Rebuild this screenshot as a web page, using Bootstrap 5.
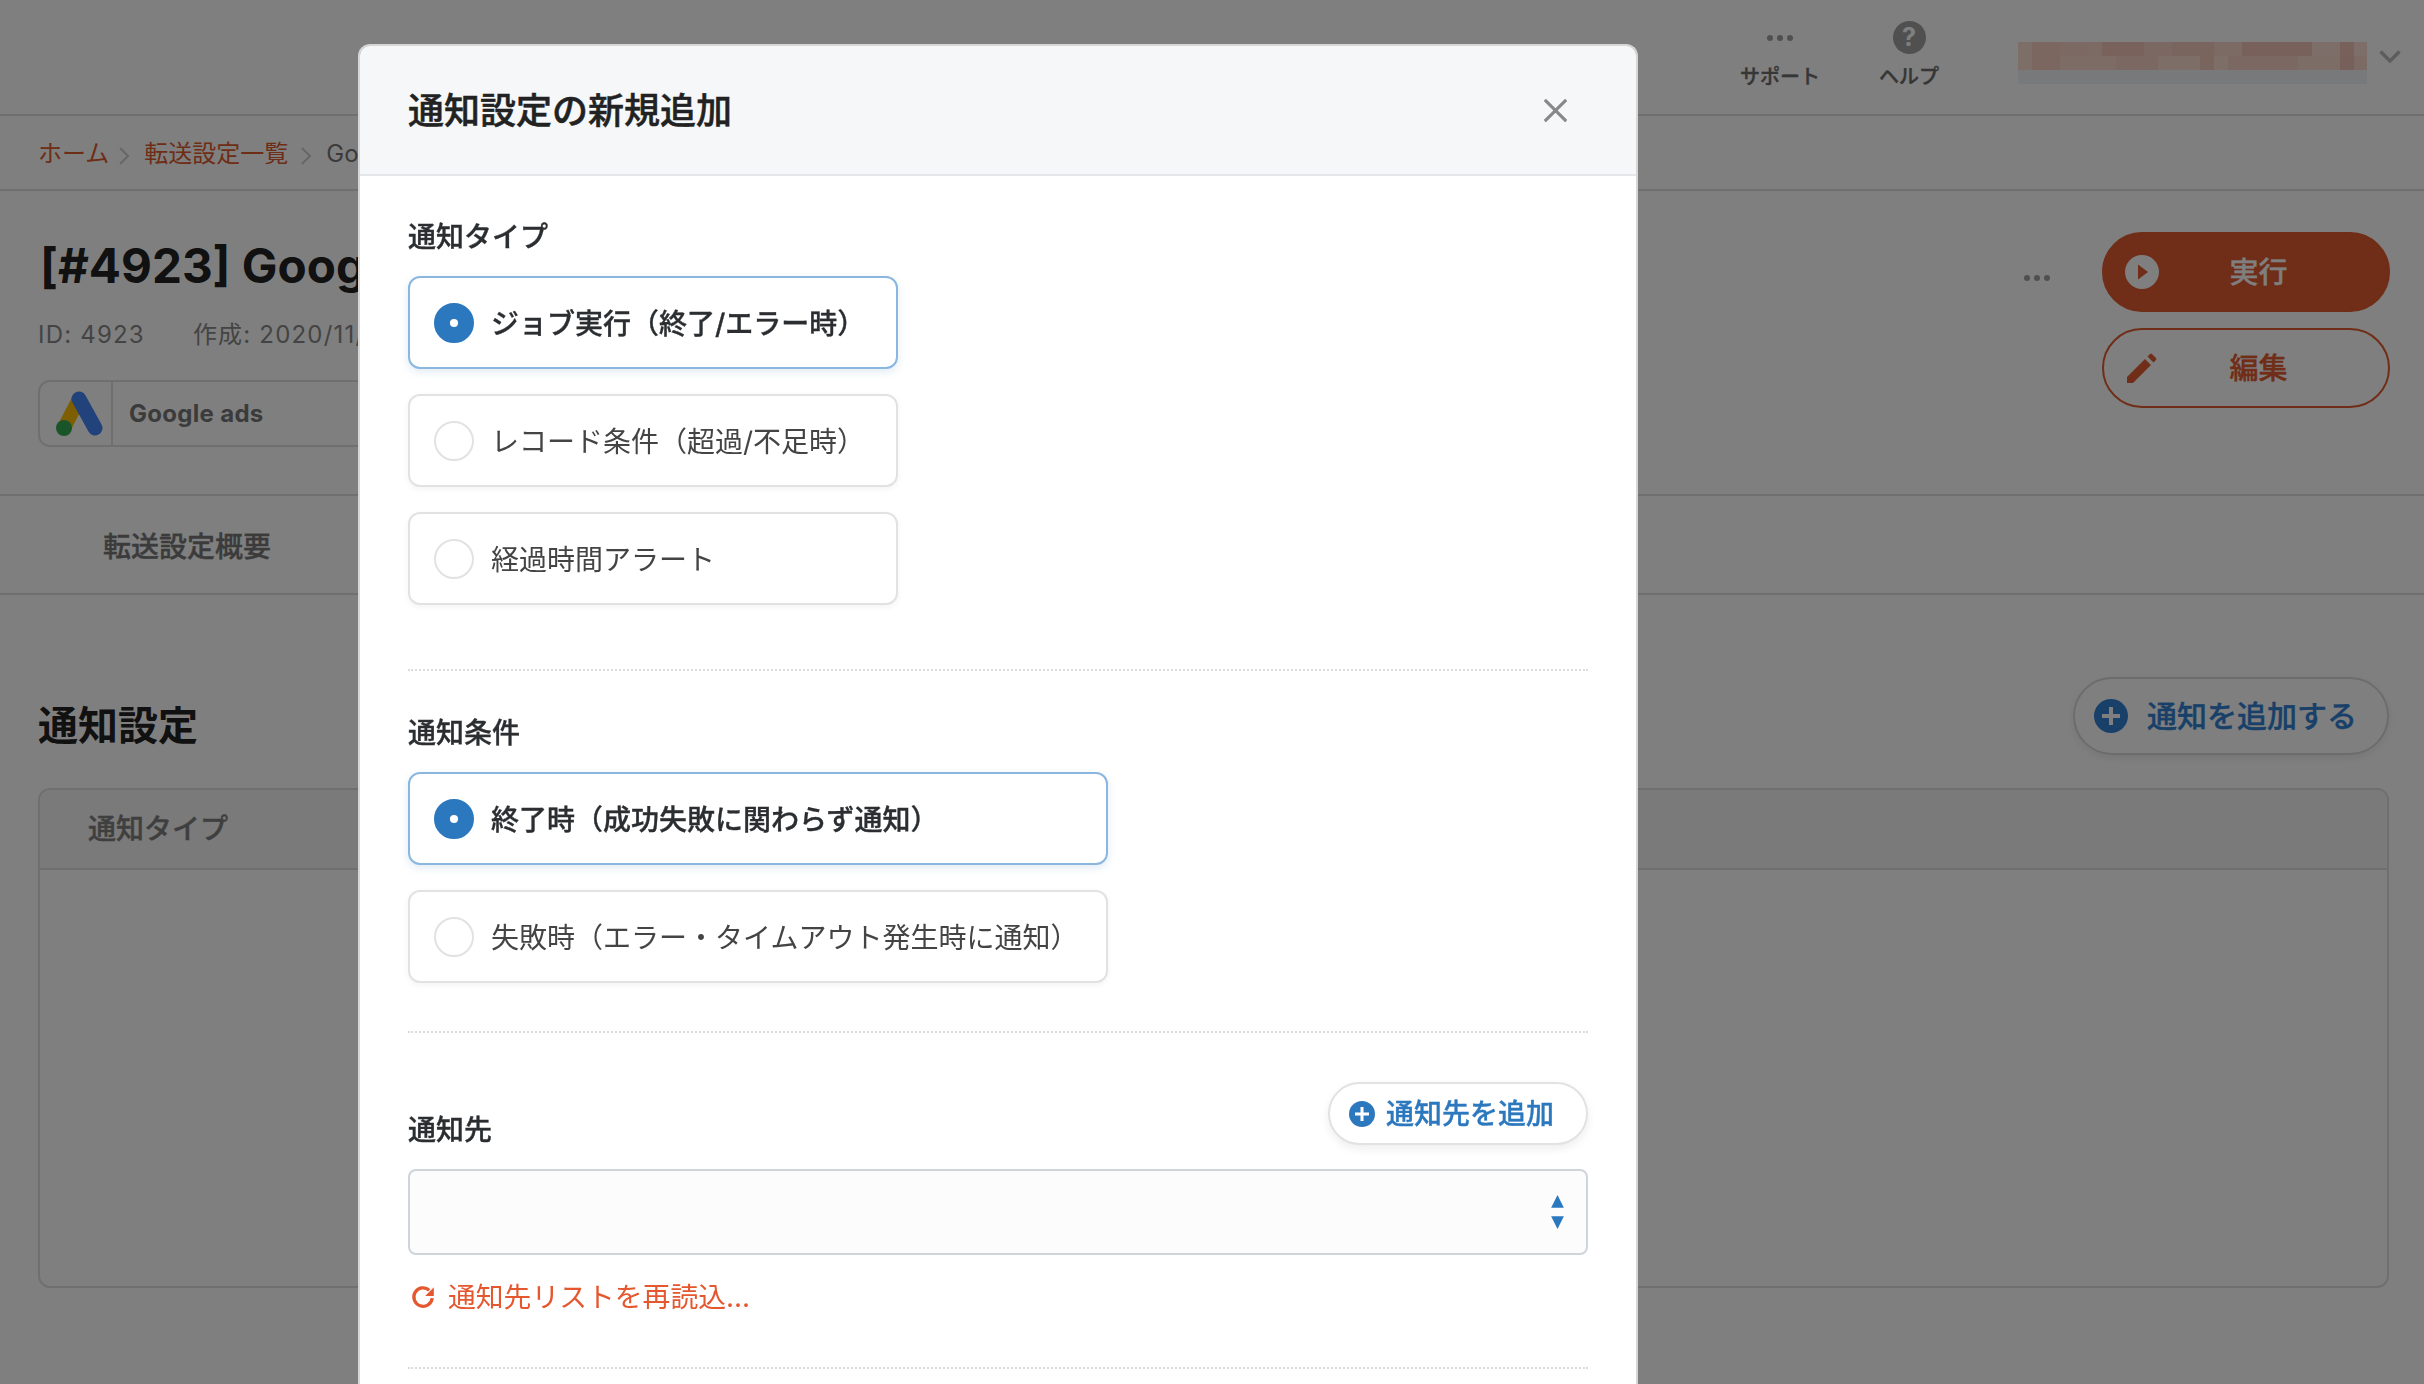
<!DOCTYPE html>
<html lang="ja">
<head>
<meta charset="utf-8">
<title>通知設定の新規追加</title>
<link rel="stylesheet" href="https://cdn.jsdelivr.net/npm/bootstrap@5.3.0/dist/css/bootstrap.min.css">
<style>
html,body{height:100%;overflow:hidden}
body{font-family:"Inter","Noto Sans CJK JP",sans-serif;background:#fff;color:#222;font-size:24px}
.semi{font-weight:500;-webkit-text-stroke:.35px currentColor}
.line-b{border-bottom:2px solid #dedede}
.top-bar{height:116px;padding-right:23px}
.top-item{width:100px;padding-top:21px;color:#6c6c6c;font-size:20px;line-height:24px}
.top-item + .top-item{margin-left:29px}
.top-ico{height:33px;margin-bottom:11px}
.help-ico{width:33px;height:33px;background:#a0a0a0;color:#fff;font-size:25px;font-weight:700;line-height:33px;-webkit-text-stroke:0}
.mosaic{width:349px;height:42px;margin:42px 12px 0 59px;background:
 linear-gradient(to right,#fcdcd0 0 14px,#f6ccc0 14px 42px,#fad2c6 42px 70px,#f8d6ca 70px 84px,#f4c4b8 84px 126px,#f8d0c4 126px 154px,#f4c8bc 154px 196px,#f9d6ca 196px 224px,#f2c2b6 224px 294px,#fbdcd2 294px 322px,#f2c2b6 322px 336px,#fcdcd2 336px 349px) 0 0/100% 14px no-repeat,
 linear-gradient(to right,#fcdcd0 0 14px,#f6ccc0 14px 42px,#fbd8cc 42px 98px,#f8d0c4 98px 140px,#fcdcd0 140px 182px,#f4c8bc 182px 196px,#fcdcd0 196px 210px,#f8d0c4 210px 280px,#fbdacf 280px 322px,#f0c0b4 322px 336px,#f9d6ca 336px 349px) 0 14px/100% 14px no-repeat,
 #f0f3f6}
.chev-top{margin-top:50px}
.crumb-bar{height:75px;padding:2px 0 0 38px;font-size:24px;color:#777;line-height:34px}
.crumb-link{color:#dd5a2e;text-decoration:none}
.crumb-sep{margin:4px 14px 0 13px}
.crumb-sep.first{margin-left:10px}
.head-area{height:305px;padding:41px 34px 0 38px}
.page-title{font-size:47.6px;line-height:60px;font-weight:700;color:#222;margin:4px 0 0 2px;white-space:nowrap}
.meta-row{margin-top:22px;font-size:24px;line-height:34px;color:#888;letter-spacing:1.2px;white-space:nowrap}
.meta-row span + span{margin-left:48px}
.svc-tag{margin-top:28px;height:67px;width:520px;border:2px solid #dedede;border-radius:12px}
.svc-ico{width:73px;border-right:2px solid #dedede;padding-left:16px}
.svc-name{padding-left:16px;font-weight:700;color:#777;font-size:24px;letter-spacing:.3px}
.more-dots{margin:43px 52px 0 0}
.run-btn{width:288px;height:80px;padding:0 30px 0 21px;font-size:29px;border-width:2px;line-height:1}
.run-label{flex:1 1 auto;text-align:center}
.run-fill{background:#e05a2e;border-color:#e05a2e;color:#fff}
.run-line{background:transparent;border-color:#e05a2e;color:#e05a2e;margin-top:16px;height:80px}
.tab-bar{height:99px;padding-left:103px;font-size:28px;color:#777;line-height:102px}
.notice-area{padding:82px 35px 0 38px}
.notice-h{font-size:40px;line-height:56px;font-weight:700;color:#222;margin:21px 0 0}
.add-big{width:316px;height:78px;padding:0 0 0 19px;gap:19px;font-size:30px;color:#3080d0;background:transparent;border:2px solid #d8d8d8;box-shadow:0 3px 8px rgba(0,0,0,.08)}
.notice-card{margin-top:33px;height:500px;border:2px solid #dedede;border-radius:12px;--bs-card-bg:transparent}
.notice-card .card-header{height:80px;padding:0 48px;background:#f4f5f5;border-bottom:2px solid #dedede;font-size:28px;color:#7e7e7e;line-height:78px;border-radius:10px 10px 0 0}
.modal-wrap{overflow:hidden}
.modal-dialog.dlg{max-width:none;width:1280px;margin:44px 0 0 358px}
.dlg .modal-content{border:2px solid #d6d6d6;border-bottom:0;border-radius:12px 12px 0 0;height:1400px;display:block}
.dlg .modal-header{height:130px;padding:1px 48px 0;background:#f6f7f9;border-bottom:2px solid #e4e6e9;border-radius:10px 10px 0 0}
.dlg .modal-title{font-size:36px;line-height:48px;font-weight:500;-webkit-text-stroke:.5px currentColor;color:#222}
.dlg .btn-close{width:25px;height:25px;padding:0;margin:-1px 20px 0 0;background-size:25px;opacity:.45}
.dlg .modal-body{padding:41px 48px 0}
.fld-label{font-size:28px;line-height:40px;color:#2b2e31;margin:0 0 19px;display:block}
.opt-card{height:93px;border:2px solid #e2e2e2;border-radius:12px;padding:2px 0 0 24px;gap:17px;font-size:28px;color:#444;background:#fff;box-shadow:0 2px 6px rgba(0,0,0,.05);cursor:pointer}
.opt-card + .opt-card{margin-top:25px}
.opt-card.is-on{border-color:#8ab6e0;color:#2b2e31;box-shadow:0 3px 8px rgba(44,120,191,.15)}
.opt-card .form-check-input{width:40px;height:40px;margin:-2px 0 0;flex:none;border:2px solid #e2e2e2}
.opt-card .form-check-input:checked{background-color:#2c78bf;border-color:#2c78bf;background-image:url("data:image/svg+xml,%3Csvg xmlns='http://www.w3.org/2000/svg' viewBox='-4 -4 8 8'%3E%3Ccircle r='.9' fill='%23fff'/%3E%3C/svg%3E")}
.w-type{width:490px}
.w-cond{width:700px}
.dot-rule{border-top:2px dotted #dcdcdc;height:0}
.r1{margin:64px 0 42px}
.r2{margin:48px 0 49px}
.r3{margin-top:50px}
.dest-head{margin-bottom:19px}
.dest-head .fld-label{margin:0}
.add-small{width:260px;height:63px;padding:0 0 0 19px;gap:11px;font-size:28px;color:#2c78bf;background:#fff;border:2px solid #e2e2e2;box-shadow:0 4px 10px rgba(0,0,0,.07);margin-bottom:5px}
.dest-select.form-select{height:86px;background-color:#fcfcfd;border:2px solid #cfd4da;border-radius:8px;background-size:15px 34px;background-position:right 21px center;background-image:url("data:image/svg+xml,%3Csvg xmlns='http://www.w3.org/2000/svg' viewBox='0 0 14 32'%3E%3Cpath fill='%232c78bf' d='M7 0l6 12H1zM7 32L1 20h12z'/%3E%3C/svg%3E")}
.reload{margin-top:22px;color:#e5582f;font-size:27.8px;line-height:40px;gap:12px;text-decoration:none;padding-left:2px}
</style>
</head>
<body>

<header class="top-bar line-b d-flex justify-content-end align-items-start">
  <div class="top-item semi text-center">
    <div class="top-ico d-flex justify-content-center align-items-center">
      <svg width="26" height="6" viewBox="0 0 26 6"><g fill="#a0a0a0"><circle cx="3" cy="3" r="3"/><circle cx="13" cy="3" r="3"/><circle cx="23" cy="3" r="3"/></g></svg>
    </div>
    サポート
  </div>
  <div class="top-item semi text-center">
    <div class="top-ico d-flex justify-content-center"><span class="help-ico rounded-circle d-block">?</span></div>
    ヘルプ
  </div>
  <div class="mosaic"></div>
  <svg class="chev-top" width="22" height="13" viewBox="0 0 22 13"><path d="M1.500 1.500L11 11l9.500-9.500" fill="none" stroke="#bbb" stroke-width="3.500"/></svg>
</header>

<nav class="crumb-bar line-b d-flex align-items-center">
  <a class="crumb-link" href="#">ホーム</a>
  <svg class="crumb-sep first" width="11" height="18" viewBox="0 0 11 18"><path d="M1 1l8 8-8 8" fill="none" stroke="#ccc" stroke-width="2"/></svg>
  <a class="crumb-link" href="#">転送設定一覧</a>
  <svg class="crumb-sep" width="11" height="18" viewBox="0 0 11 18"><path d="M1 1l8 8-8 8" fill="none" stroke="#ccc" stroke-width="2"/></svg>
  <span>Google ads</span>
</nav>

<section class="head-area line-b d-flex justify-content-between">
  <div>
    <h1 class="page-title">[#4923] Google ads</h1>
    <div class="meta-row"><span>ID: 4923</span><span>作成: 2020/11/01</span></div>
    <div class="svc-tag d-flex">
      <div class="svc-ico d-flex align-items-center">
        <svg width="48" height="48" viewBox="0 0 48 48"><path d="M23 9L8 38" stroke="#fbbc04" stroke-width="14" fill="none"/><circle cx="8" cy="38" r="8" fill="#34a853"/><path d="M23 9l16 29" stroke="#4285f4" stroke-width="15" stroke-linecap="round" fill="none"/></svg>
      </div>
      <div class="svc-name d-flex align-items-center">Google ads</div>
    </div>
  </div>
  <div class="d-flex align-items-start">
    <svg class="more-dots" width="26" height="6" viewBox="0 0 26 6"><g fill="#a0a0a0"><circle cx="3" cy="3" r="3"/><circle cx="13" cy="3" r="3"/><circle cx="23" cy="3" r="3"/></g></svg>
    <div>
      <button type="button" class="btn run-btn run-fill semi rounded-pill d-flex align-items-center">
        <svg width="34" height="34" viewBox="0 0 34 34"><circle cx="17" cy="17" r="17" fill="#fff"/><path d="M13 9.500v15l10-7.500z" fill="#e05a2e"/></svg>
        <span class="run-label">実行</span>
      </button>
      <button type="button" class="btn run-btn run-line semi rounded-pill d-flex align-items-center">
        <svg width="34" height="32" viewBox="-2 -1 34 32"><path d="M0 24L18 6l6 6L6 30H0zM20.500 3.500L23 1q1-1 2 0l4 4q1 1 0 2l-2.500 2.500z" fill="#e05a2e"/></svg>
        <span class="run-label">編集</span>
      </button>
    </div>
  </div>
</section>

<div class="tab-bar semi line-b">転送設定概要</div>

<section class="notice-area">
  <div class="d-flex justify-content-between align-items-start">
    <h2 class="notice-h">通知設定</h2>
    <button type="button" class="btn add-big semi rounded-pill d-flex align-items-center">
      <svg width="34" height="34" viewBox="0 0 34 34"><circle cx="17" cy="17" r="17" fill="#3080d0"/><path d="M15 8h4v7h7v4h-7v7h-4v-7H8v-4h7z" fill="#fff"/></svg>
      通知を追加する
    </button>
  </div>
  <div class="card notice-card">
    <div class="card-header semi">通知タイプ</div>
  </div>
</section>

<div class="modal-backdrop show"></div>

<div class="modal modal-wrap show d-block" tabindex="-1" role="dialog" aria-modal="true">
  <div class="modal-dialog dlg">
    <div class="modal-content">
      <div class="modal-header">
        <h5 class="modal-title">通知設定の新規追加</h5>
        <button type="button" class="btn-close" aria-label="Close"></button>
      </div>
      <div class="modal-body">
        <span class="fld-label semi">通知タイプ</span>
        <div class="w-type">
          <label class="opt-card is-on semi d-flex align-items-center"><input class="form-check-input" type="radio" name="ntype" checked>ジョブ実行（終了/エラー時）</label>
          <label class="opt-card d-flex align-items-center"><input class="form-check-input" type="radio" name="ntype">レコード条件（超過/不足時）</label>
          <label class="opt-card d-flex align-items-center"><input class="form-check-input" type="radio" name="ntype">経過時間アラート</label>
        </div>
        <div class="dot-rule r1"></div>
        <span class="fld-label semi">通知条件</span>
        <div class="w-cond">
          <label class="opt-card is-on semi d-flex align-items-center"><input class="form-check-input" type="radio" name="ncond" checked>終了時（成功失敗に関わらず通知）</label>
          <label class="opt-card d-flex align-items-center"><input class="form-check-input" type="radio" name="ncond">失敗時（エラー・タイムアウト発生時に通知）</label>
        </div>
        <div class="dot-rule r2"></div>
        <div class="dest-head d-flex justify-content-between align-items-end">
          <span class="fld-label semi">通知先</span>
          <button type="button" class="btn add-small semi rounded-pill d-flex align-items-center">
            <svg width="26" height="26" viewBox="0 0 26 26"><circle cx="13" cy="13" r="13" fill="#2c78bf"/><path d="M11.500 6h3v5.500H20v3h-5.500V20h-3v-5.500H6v-3h5.500z" fill="#fff"/></svg>
            通知先を追加
          </button>
        </div>
        <select class="form-select dest-select" aria-label="通知先"></select>
        <a class="reload d-flex align-items-center" href="#">
          <svg width="26" height="26" viewBox="0 0 24 24"><path d="M20.500 13A8.500 8.500 0 1 1 17.800 5.800" fill="none" stroke="#e5582f" stroke-width="3"/><path d="M22 3v8h-8z" fill="#e5582f"/></svg>
          通知先リストを再読込...
        </a>
        <div class="dot-rule r3"></div>
      </div>
    </div>
  </div>
</div>

<script src="https://cdn.jsdelivr.net/npm/bootstrap@5.3.0/dist/js/bootstrap.bundle.min.js"></script>
</body>
</html>
